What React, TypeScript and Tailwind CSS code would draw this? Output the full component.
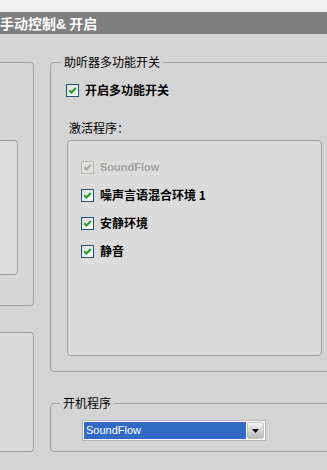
import React from "react";

const CJK = '"Noto Sans CJK SC", "Liberation Sans", sans-serif';
const LAT = '"Liberation Sans", "Noto Sans CJK SC", sans-serif';

function Check({ disabled = false }: { disabled?: boolean }) {
  return (
    <span
      className={
        "inline-flex h-[13px] w-[13px] shrink-0 items-center justify-center border " +
        (disabled
          ? "border-[#b8b8b0] bg-[#e0e0dc]"
          : "border-[#1c5180] bg-gradient-to-br from-[#dcdcd7] to-[#ffffff]")
      }
    >
      <svg width="9" height="9" viewBox="0 0 9 9">
        <path
          d="M1.3 4.2 L3.5 6.5 L7.8 2"
          fill="none"
          stroke={disabled ? "#a8a8a2" : "#21a121"}
          strokeWidth="2"
        />
      </svg>
    </span>
  );
}

function Item({ label, disabled = false, latin = false }: { label: string; disabled?: boolean; latin?: boolean }) {
  return (
    <div className="flex h-[16px] items-center">
      <Check disabled={disabled} />
      <span
        className={
          "ml-[6px] whitespace-nowrap font-bold leading-[16px] " +
          (disabled ? "text-[11px] text-[#a3a39c]" : "text-[12px] text-black")
        }
        style={{ fontFamily: latin ? LAT : CJK }}
      >
        {label}
      </span>
    </div>
  );
}

export default function App() {
  return (
    <div
      className="flex h-[470px] w-[327px] flex-col overflow-hidden bg-[#d4d4d4]"
      style={{ fontFamily: CJK }}
    >
      <div className="h-[12px] shrink-0 bg-[#f1f1f1]" />
      <div className="h-[22px] shrink-0 whitespace-nowrap bg-[#7f7f7f] text-[14px] font-bold leading-[22px] text-white">
        手动控制<span style={{ fontFamily: LAT }}>&amp;</span> 开启
      </div>
      <div className="flex flex-1">
        {/* left column */}
        <div className="flex w-[34px] shrink-0 flex-col pt-[28px]">
          <div className="flex h-[244px] w-[34px] flex-col items-start rounded-r-[4px] border border-l-0 border-[#a0a0a0] bg-[#d6d6d6] pt-[77px]">
            <div className="h-[135px] w-[18px] rounded-r-[4px] border border-l-0 border-[#a0a0a0] bg-[#dcdcdc]" />
          </div>
          <div className="mt-[26px] h-[120px] w-[34px] rounded-r-[4px] border border-l-0 border-[#a0a0a0] bg-[#dadada]" />
        </div>
        {/* right column */}
        <div className="ml-[16px] flex flex-col pt-[21px]">
          <fieldset className="w-[290px] rounded-[4px] border border-[#a0a0a0] pb-[15px] pl-[15px]">
            <legend className="-ml-[5px] px-[3px] text-[12px] leading-[14px] text-black">助听器多功能开关</legend>
            <div className="mt-[13px]">
              <Item label="开启多功能开关" />
            </div>
            <div className="ml-[3px] mt-[22px] h-[16px] text-[12px] leading-[16px] text-black">激活程序：</div>
            <div className="ml-[1px] mt-[4px] flex h-[216px] w-[255px] flex-col gap-[12px] rounded-[4px] border border-[#a0a0a0] bg-[#dbdbdb] pl-[13px] pt-[18px]">
              <Item label="SoundFlow" disabled latin />
              <Item label="噪声言语混合环境 1" />
              <Item label="安静环境" />
              <Item label="静音" />
            </div>
          </fieldset>
          <fieldset className="mt-[24px] w-[290px] rounded-[4px] border border-[#a0a0a0] pb-[10px] pl-[31px]">
            <legend className="-ml-[22px] px-[3px] text-[12px] leading-[14px] text-black">开机程序</legend>
            <div className="mt-[10px] flex h-[21px] w-[184px] border border-[#b5b5b5] bg-white p-[1px]">
              <div
                className="flex flex-1 items-center bg-[#316ac5] pl-[2px] text-[11px] leading-[17px] text-white"
                style={{ fontFamily: LAT }}
              >
                SoundFlow
              </div>
              <div className="ml-[1px] flex w-[17px] items-center justify-center rounded-[2px] border border-[#c4c4c4] bg-gradient-to-b from-[#f4f4f4] to-[#b9b9b9]">
                <svg width="7" height="4" viewBox="0 0 7 4">
                  <path d="M0 0 H7 L3.5 4 Z" fill="#000" />
                </svg>
              </div>
            </div>
          </fieldset>
        </div>
      </div>
    </div>
  );
}
